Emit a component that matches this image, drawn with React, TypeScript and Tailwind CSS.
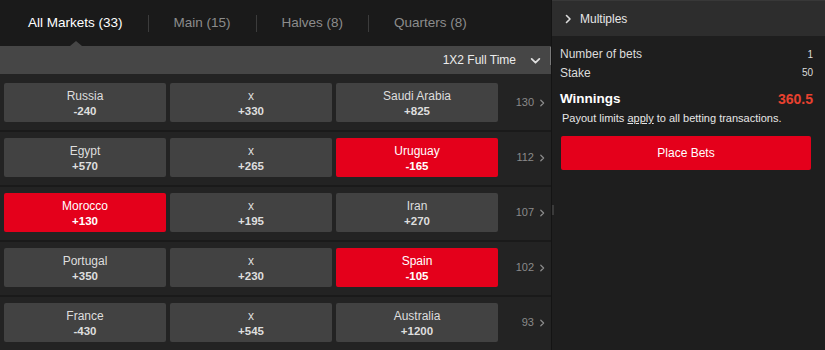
import React from 'react';

type Pick = { label: string; odds: string; active?: boolean };
type Match = { picks: Pick[]; count: number };

const matches: Match[] = [
  { picks: [{ label: 'Russia', odds: '-240' }, { label: 'x', odds: '+330' }, { label: 'Saudi Arabia', odds: '+825' }], count: 130 },
  { picks: [{ label: 'Egypt', odds: '+570' }, { label: 'x', odds: '+265' }, { label: 'Uruguay', odds: '-165', active: true }], count: 112 },
  { picks: [{ label: 'Morocco', odds: '+130', active: true }, { label: 'x', odds: '+195' }, { label: 'Iran', odds: '+270' }], count: 107 },
  { picks: [{ label: 'Portugal', odds: '+350' }, { label: 'x', odds: '+230' }, { label: 'Spain', odds: '-105', active: true }], count: 102 },
  { picks: [{ label: 'France', odds: '-430' }, { label: 'x', odds: '+545' }, { label: 'Australia', odds: '+1200' }], count: 93 },
];

const tabs = [
  { label: 'All Markets (33)', active: true },
  { label: 'Main (15)' },
  { label: 'Halves (8)' },
  { label: 'Quarters (8)' },
];

const Chevron = ({ dir, className }: { dir: 'right' | 'down'; className?: string }) => (
  <svg viewBox="0 0 10 10" className={className} fill="none" stroke="currentColor" strokeWidth="1.6" strokeLinecap="round" strokeLinejoin="round">
    {dir === 'right' ? <path d="M3.5 1.5 L7 5 L3.5 8.5" /> : <path d="M1.5 3.5 L5 7 L8.5 3.5" />}
  </svg>
);

const OddsButton = ({ pick }: { pick: Pick }) => (
  <button className={`w-[162px] h-[39px] rounded-[2px] flex flex-col items-center justify-center leading-none pt-[2px] ${pick.active ? 'bg-[#e4001b] text-white' : 'bg-[#424242] text-[#dedede]'}`}>
    <span className="text-[12px]">{pick.label}</span>
    <span className="text-[11.5px] font-bold mt-[4px]">{pick.odds}</span>
  </button>
);

const App = () => {
  return <div className="relative flex w-[825px] h-[350px] overflow-hidden bg-[#1e1e1e] font-['Liberation_Sans',Arial,sans-serif]">
      {/* Markets */}
      <div className="w-[551px] flex flex-col bg-[#232323]">
        <div className="h-[47px] flex items-center pl-[3px] bg-[#1a1a1a]">
          {tabs.map((tab, i) => <div key={tab.label} className="flex items-center">
              {i > 0 && <span className="w-px h-[17px] bg-[#3c3c3c]" />}
              <div className={`px-[25px] text-[13.5px] leading-[20px] ${tab.active ? 'text-white' : 'text-[#8c8c8c]'}`}>
                {tab.label}
              </div>
            </div>)}
        </div>

        <div className="relative h-[28px] flex items-center justify-end pr-[10px] bg-[#464646] text-[12px] text-[#ececec]">
          {/* active tab pointer */}
          <svg viewBox="0 0 12 5" className="absolute left-[70px] -top-[5px] w-[12px] h-[5px]">
            <path d="M0 5 L6 0 L12 5 Z" fill="#464646" />
          </svg>
          <span>1X2 Full Time</span>
          <Chevron dir="down" className="w-[11px] h-[11px] ml-[14px] text-[#e0e0e0]" />
        </div>

        {matches.map((m, i) => <div key={m.count} className={`flex items-start pl-[4px] pb-[8px] ${i === 0 ? 'pt-[9px]' : 'pt-[6px] border-t-2 border-[#1a1a1a]'}`}>
            <div className="flex gap-[4px]">
              {m.picks.map(p => <OddsButton key={p.label} pick={p} />)}
            </div>
            <div className="flex-1 h-[39px] flex items-center justify-end pr-[5px] text-[11px] text-[#8a8a8a]">
              {m.count}
              <Chevron dir="right" className="w-[8px] h-[8px] ml-[4px]" />
            </div>
          </div>)}
      </div>

      {/* Bet slip */}
      <div className="flex-1 flex flex-col border-l border-[#141414] bg-[#1e1e1e]">
        <div className="h-[36px] flex items-center pl-[11px] bg-[#2d2d2d] border-t border-[#383838] text-[12px] text-[#e8e8e8]">
          <Chevron dir="right" className="w-[10px] h-[10px] text-[#dcdcdc]" />
          <span className="ml-[7px]">Multiples</span>
        </div>
        <div className="px-[8px] pt-[9px] text-[#dcdcdc]">
          <div className="flex justify-between items-center h-[18px] text-[12px]">
            <span>Number of bets</span>
            <span className="text-[10px] pr-[4px]">1</span>
          </div>
          <div className="flex justify-between items-center h-[19px] text-[12px]">
            <span>Stake</span>
            <span className="text-[10px] pr-[4px]">50</span>
          </div>
          <div className="flex justify-between items-center h-[29px] pt-[5px] font-bold">
            <span className="text-[13.5px] text-white">Winnings</span>
            <span className="text-[14px] text-[#e8412f] pr-[4px]">360.5</span>
          </div>
          <p className="mt-[1px] text-[11px] text-[#e6e6e6] pl-[2px] leading-[12px]">
            Payout limits <span className="underline">apply</span> to all betting transactions.
          </p>
          <button className="mt-[12px] ml-[1px] w-[250px] h-[34px] rounded-[2px] bg-[#e4001b] text-white text-[12px]">
            Place Bets
          </button>
        </div>
      </div>

      {/* scrollbar marks */}
      <span className="absolute left-[550px] top-[47px] w-px h-[18px] bg-[#7a7a7a]" />
      <span className="absolute left-[552px] top-[205px] w-[2px] h-[10px] bg-[#3a3a3a]" />
    </div>;
};

export default App;
